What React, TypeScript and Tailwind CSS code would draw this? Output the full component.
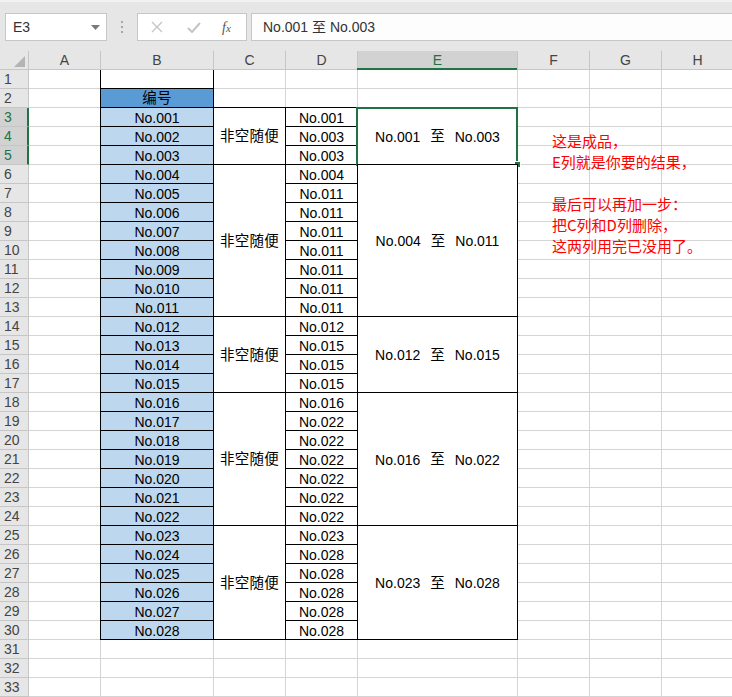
import React from 'react';

type Kind = 'plain' | 'box' | 'blue' | 'head' | 'top';
type Cell = { kind: Kind; span?: number; text?: string; to?: string; sel?: boolean };

const pad = (n: number) => 'No.' + String(n).padStart(3, '0');

const plain = (n: number): Cell[] => Array.from({ length: n }, () => ({ kind: 'plain' }));

// 列B：编号
const colB: Cell[] = [
  { kind: 'top' },
  { kind: 'head', text: '编号' },
  ...Array.from({ length: 28 }, (_, i) => ({ kind: 'blue' as Kind, text: pad(i + 1) })),
  ...plain(3),
];

const groups = [
  { span: 3, from: 1, to: 3 },
  { span: 8, from: 4, to: 11 },
  { span: 4, from: 12, to: 15 },
  { span: 7, from: 16, to: 22 },
  { span: 6, from: 23, to: 28 },
];

const colC: Cell[] = [
  ...plain(2),
  ...groups.map((g) => ({ kind: 'box' as Kind, span: g.span, text: '非空随便' })),
  ...plain(3),
];

// 列D：每组第一个是起始，后面都是结束
const colD: Cell[] = [
  ...plain(2),
  ...groups.flatMap((g) =>
    Array.from({ length: g.span }, (_, i) => ({
      kind: 'box' as Kind,
      text: pad(i === 0 ? g.from : g.to),
    })),
  ),
  ...plain(3),
];

const colE: Cell[] = [
  ...plain(2),
  ...groups.map((g, i) => ({
    kind: 'box' as Kind,
    span: g.span,
    text: pad(g.from),
    to: pad(g.to),
    sel: i === 0,
  })),
  ...plain(3),
];

const columns: { name: string; w: string; cells: Cell[] }[] = [
  { name: 'A', w: 'w-[72px]', cells: plain(33) },
  { name: 'B', w: 'w-[113px]', cells: colB },
  { name: 'C', w: 'w-[72px]', cells: colC },
  { name: 'D', w: 'w-[72px]', cells: colD },
  { name: 'E', w: 'w-[160px]', cells: colE },
  { name: 'F', w: 'w-[72px]', cells: plain(33) },
  { name: 'G', w: 'w-[72px]', cells: plain(33) },
  { name: 'H', w: 'w-[72px]', cells: plain(33) },
];

function SheetCell({ cell }: { cell: Cell }) {
  if (cell.kind === 'plain') {
    return <div className="h-[19px] shrink-0 border-b border-r border-[#d4d4d4]" />;
  }
  if (cell.kind === 'top') {
    return <div className="relative z-10 -ml-px h-[19px] shrink-0 border-x border-b border-black bg-white" />;
  }
  const span = cell.span ?? 1;
  const bg =
    cell.kind === 'blue' ? 'bg-[#bdd7ee]' : cell.kind === 'head' ? 'bg-[#5b9bd5]' : 'bg-white';
  const cjk = cell.kind === 'head' || cell.text === '非空随便';
  return (
    <div
      className={`relative z-10 -ml-px -mt-px flex shrink-0 items-center justify-center gap-[10px] border border-black pt-px leading-none whitespace-pre text-black ${bg}`}
      style={{ height: 19 * span + 1 }}
    >
      {cell.to ? (
        <>
          <span className="text-[14px]">{cell.text}</span>
          <span className="text-[14.5px]">至</span>
          <span className="text-[14px]">{cell.to}</span>
        </>
      ) : (
        <span className={cjk ? 'text-[14.5px] tracking-[0.3px]' : 'text-[14px]'}>{cell.text}</span>
      )}
      {cell.sel && (
        <>
          <div className="absolute -left-[2px] -right-px -top-px -bottom-[2px] z-20 border-2 border-[#217346]" />
          <div className="absolute -right-[4px] -bottom-[4px] z-30 h-[7px] w-[7px] border border-white bg-[#217346]" />
        </>
      )}
    </div>
  );
}

function Toolbar() {
  return (
    <div className="flex h-[51px] items-start border-t-2 border-[#f2f2f2] bg-[#e6e6e6] pl-[5px] pt-[11px]">
      <div className="flex h-[28px] w-[102px] items-center justify-between border border-[#c6c6c6] bg-white pl-[7px] pr-[6px] text-[14px] text-[#333]">
        <span>E3</span>
        <svg width="9" height="5" viewBox="0 0 9 5">
          <path d="M0 0h9L4.5 5z" fill="#7a7a7a" />
        </svg>
      </div>
      <div className="flex h-[28px] w-[30px] flex-col items-center justify-center gap-[3px]">
        <span className="h-[2px] w-[2px] bg-[#a6a6a6]" />
        <span className="h-[2px] w-[2px] bg-[#a6a6a6]" />
        <span className="h-[2px] w-[2px] bg-[#a6a6a6]" />
      </div>
      <div className="flex h-[28px] w-[110px] items-center border border-[#c6c6c6] bg-white">
        <svg className="ml-[13px]" width="12" height="12" viewBox="0 0 12 12">
          <path d="M1 1l10 10M11 1L1 11" stroke="#c4c4c4" strokeWidth="1.3" />
        </svg>
        <svg className="ml-[24px]" width="14" height="11" viewBox="0 0 14 11">
          <path d="M1 6l4 4L13 1" stroke="#c4c4c4" strokeWidth="2" fill="none" />
        </svg>
        <span className="ml-[21px] font-['Liberation_Serif',serif] text-[14px] italic text-[#555]">
          f<span className="text-[11px]">x</span>
        </span>
      </div>
      <div className="ml-[4px] flex h-[28px] flex-1 items-center border border-r-0 border-[#c6c6c6] bg-[#fdfdfd] pl-[11px] text-[14px] whitespace-pre text-[#333]">
        <span>No.001 至 No.003</span>
      </div>
    </div>
  );
}

export default function App() {
  const rows = Array.from({ length: 33 }, (_, i) => i + 1);
  return (
    <div className="relative h-[697px] w-[732px] overflow-hidden bg-white font-['Liberation_Sans','Noto_Sans_CJK_SC',sans-serif]">
      <Toolbar />

      {/* 列标题 */}
      <div className="flex h-[19px] border-b border-[#c6c6c6] bg-[#e6e6e6] text-[14px] text-[#444]">
        <div className="relative w-[29px] shrink-0 border-r border-[#c6c6c6]">
          <svg className="absolute right-[3px] bottom-[2px]" width="11" height="11" viewBox="0 0 11 11">
            <path d="M11 0v11H0z" fill="#b4b4b4" />
          </svg>
        </div>
        {columns.map((c) =>
          c.name === 'E' ? (
            <div
              key={c.name}
              className={`${c.w} relative shrink-0 border-r border-[#c6c6c6] bg-[#d2d2d2] text-center leading-[18px] text-[#217346]`}
            >
              {c.name}
              <div className="absolute -left-px right-0 -bottom-px h-[2px] bg-[#217346]" />
            </div>
          ) : (
            <div key={c.name} className={`${c.w} shrink-0 border-r border-[#c6c6c6] text-center leading-[18px]`}>
              {c.name}
            </div>
          ),
        )}
      </div>

      <div className="flex">
        {/* 行号 */}
        <div className="flex w-[29px] shrink-0 flex-col bg-[#e6e6e6] text-[14px] text-[#444]">
          {rows.map((r) =>
            r >= 3 && r <= 5 ? (
              <div
                key={r}
                className="h-[19px] border-b border-r-2 border-b-[#c6c6c6] border-r-[#217346] bg-[#d2d2d2] pl-[4px] leading-[19px] text-[#217346]"
              >
                {r}
              </div>
            ) : (
              <div key={r} className="h-[19px] border-b border-r border-[#c6c6c6] pl-[4px] leading-[19px]">
                {r}
              </div>
            ),
          )}
        </div>

        {columns.map((c) => (
          <div key={c.name} className={`${c.w} flex shrink-0 flex-col`}>
            {c.cells.map((cell, i) => (
              <SheetCell key={i} cell={cell} />
            ))}
          </div>
        ))}
      </div>

      {/* 文本框说明 */}
      <div className="absolute left-[552px] top-[130px] z-40 font-['Noto_Sans_CJK_SC',sans-serif] text-[15px] leading-[21px] text-[#ff0000]">
        <p>这是成品，</p>
        <p>E列就是你要的结果，</p>
        <p>&nbsp;</p>
        <p>最后可以再加一步：</p>
        <p>把C列和D列删除，</p>
        <p>这两列用完已没用了。</p>
      </div>
    </div>
  );
}
